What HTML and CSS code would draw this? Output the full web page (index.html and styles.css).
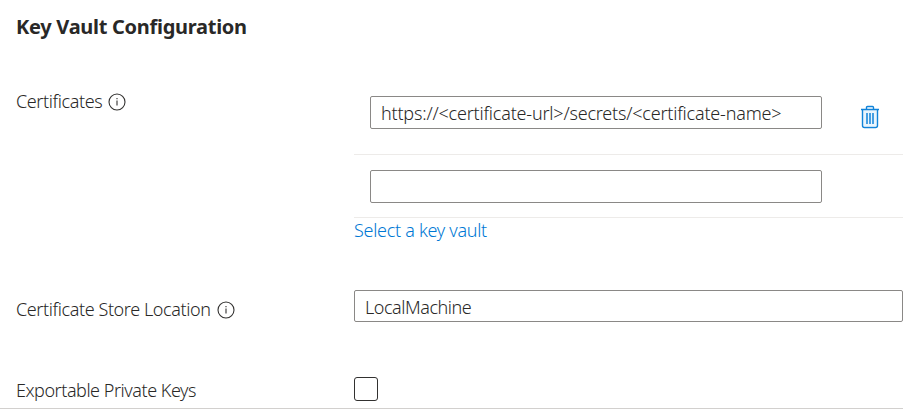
FILE: index.html
```html
<!DOCTYPE html>
<html lang="en">
<head>
<meta charset="utf-8">
<title>Key Vault Configuration</title>
<link rel="stylesheet" href="styles.css">
</head>
<body>
<form class="panel">
  <h1 class="title">Key Vault Configuration</h1>
  <div class="row row-certs">
    <div class="label"><span>Certificates</span>
      <svg class="info" viewBox="0 0 18 18"><circle cx="9" cy="9" r="8"/><path d="M9 7.500V12.500M9 5V6.200"/></svg>
    </div>
    <div class="certs">
      <div class="cert cert-first">
        <div class="box">https://&lt;certificate-url&gt;/secrets/&lt;certificate-name&gt;</div>
        <svg class="trash" viewBox="0 0 20 24"><path class="fill" d="M3 4.500H17V21H3Z"/><path d="M1 4.500H19M6.500 4.500V2.500Q6.500 1.500 7.500 1.500H12.500Q13.500 1.500 13.500 2.500V4.500M2.500 4.500V20.500Q2.500 22.500 4.500 22.500H15.500Q17.500 22.500 17.500 20.500V4.500"/><path class="bars" d="M7 8V19M10 8V19M13 8V19"/></svg>
      </div>
      <div class="cert cert-second"><div class="box"></div></div>
      <a class="link">Select a key vault</a>
    </div>
  </div>
  <div class="row row-store">
    <div class="label"><span>Certificate Store Location</span>
      <svg class="info" viewBox="0 0 18 18"><circle cx="9" cy="9" r="8"/><path d="M9 7.500V12.500M9 5V6.200"/></svg>
    </div>
    <div class="box select">LocalMachine</div>
  </div>
  <div class="row row-keys">
    <div class="label keys"><span>Exportable Private Keys</span></div>
    <div class="check"></div>
  </div>
</form>
</body>
</html>
```
FILE: styles.css
```css
* { box-sizing: border-box; }
body { margin: 0; background: #fff; color: #292827; font: 350 18px/24px "Segoe UI", "Noto Sans", "Open Sans", sans-serif; white-space: nowrap; overflow: hidden; }
.panel { height: 409px; padding-left: 16px; border-bottom: 1px solid #d2d0ce; }
.title { margin: 0; padding-top: 14px; height: 96px; font-size: 20px; line-height: 26px; font-weight: 700; color: #292827; letter-spacing: -0.28px; }
.row { display: grid; grid-template-columns: 338px 1fr; align-items: start; }
.row-certs { height: 194px; }
.row-store { height: 87px; }
.label { display: flex; align-items: center; gap: 6px; letter-spacing: -0.4px; }
.label span { margin-top: -1px; }
.label.keys { letter-spacing: -0.46px; }
.row-certs .label { margin-top: -6px; }
.row-store .label { margin-top: 8px; }
.row-keys .label { margin-top: 2px; }
.info { width: 18px; height: 18px; fill: none; stroke: #323130; stroke-width: 1.1; }
.cert { display: flex; padding-left: 16px; border-bottom: 1px solid #edebe9; }
.cert-first { height: 59px; }
.cert-second { height: 63px; padding-top: 15px; }
.box { width: 452px; height: 33px; padding-left: 10px; border: 1px solid #8a8886; border-radius: 2px; line-height: 33px; letter-spacing: -0.2px; }
.box.select { width: 549px; height: 32px; line-height: 33px; letter-spacing: -0.46px; }
.trash { width: 20px; height: 24px; margin: 9px 0 0 38px; fill: none; stroke: #1083d9; stroke-width: 1.4; }
.trash .fill { stroke: none; fill: #eaf5fd; }
.trash .bars { stroke-width: 1.5; }
.link { display: block; color: #0078d4; letter-spacing: -0.3px; }
.check { width: 24px; height: 24px; border: 1px solid #323130; border-radius: 3px; }
```
